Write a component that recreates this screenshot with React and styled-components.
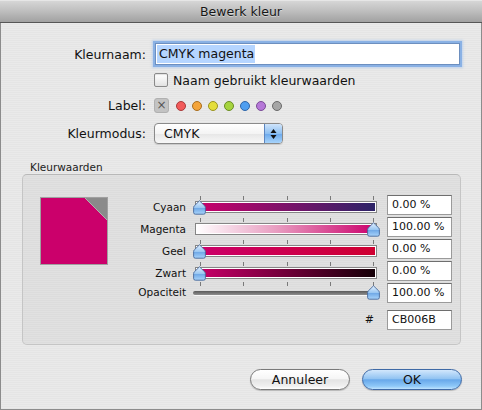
import React from "react"
import styled, { createGlobalStyle } from "styled-components"

const GlobalStyle = createGlobalStyle`
  html, body {
    margin: 0;
    padding: 0;
    background: #e8e8e8;
  }
  body {
    font-family: "DejaVu Sans", "Lucida Grande", sans-serif;
    color: #111;
  }
`

const Window = styled.div`
  width: 482px;
  height: 410px;
  display: flex;
  flex-direction: column;
  box-sizing: border-box;
  overflow: hidden;
`

const TitleBar = styled.div`
  height: 22px;
  flex: none;
  display: flex;
  align-items: center;
  justify-content: center;
  font-size: 12.5px;
  color: #161616;
  text-shadow: 0 1px 0 rgba(255, 255, 255, 0.45);
  background: linear-gradient(#d6d6d6, #bdbdbd 50%, #a1a1a1);
  border-top: 1px solid #e6e6e6;
  box-sizing: border-box;
  border-bottom: 1px solid #565656;
  height: 23px;
`

const Body = styled.div`
  flex: 1;
  display: flex;
  flex-direction: column;
  padding-top: 20px;
  border: 1px solid #8c8c8c;
  border-top: none;
  background: repeating-linear-gradient(#eaeaea 0 1px, #e5e5e5 1px 2px);
`

const Row = styled.div`
  display: flex;
  align-items: center;
  gap: 8px;
  height: ${(p) => p.h}px;
  margin-top: ${(p) => p.mt || 0}px;
`

const Label = styled.div`
  width: 145px;
  text-align: right;
  font-size: 12.5px;
`

const TextField = styled.div`
  margin-left: 1px;
  width: 305px;
  height: 22px;
  box-sizing: border-box;
  border: 1px solid #6d8fbf;
  background: #fff;
  box-shadow: 0 0 0 2px rgba(120, 165, 225, 0.75), 0 0 2px 3px rgba(150, 190, 240, 0.5);
  display: flex;
  align-items: center;
  padding-left: 1px;
  font-size: 12.5px;
`

const Selected = styled.span`
  background: #b5d5ff;
  padding: 1px 1px 2px 2px;
`

const CheckBox = styled.span`
  width: 14px;
  height: 14px;
  box-sizing: border-box;
  border: 1px solid #8a8a8a;
  border-radius: 2px;
  background: linear-gradient(#ffffff, #f2f2f2 50%, #e2e2e2);
  box-shadow: inset 0 1px 1px rgba(0, 0, 0, 0.12);
`

const CheckText = styled.span`
  font-size: 12.5px;
  margin-left: -3px;
`

const Swatches = styled.div`
  display: flex;
  align-items: center;
  gap: 6px;
`

const NoLabel = styled.span`
  width: 15px;
  height: 15px;
  box-sizing: border-box;
  border-radius: 3px;
  background: #c3c3c3;
  border: 1px solid #b0b0b0;
  color: #555;
  font-size: 12px;
  line-height: 13px;
  text-align: center;
  margin-right: 1px;
`

const Dot = styled.span`
  width: 10px;
  height: 10px;
  box-sizing: border-box;
  border-radius: 50%;
  background: ${(p) => p.c};
  border: 1px solid ${(p) => p.b};
`

const Popup = styled.div`
  width: 129px;
  height: 21px;
  box-sizing: border-box;
  border: 1px solid #8a8a8a;
  border-radius: 4px;
  display: flex;
  overflow: hidden;
  background: linear-gradient(#ffffff, #f4f4f4 50%, #e6e6e6 51%, #f8f8f8);
  box-shadow: 0 1px 1px rgba(0, 0, 0, 0.12);
`

const PopupText = styled.span`
  flex: 1;
  padding-left: 9px;
  font-size: 12.5px;
  line-height: 19px;
`

const Stepper = styled.span`
  width: 17px;
  border-left: 1px solid #5c86c0;
  background: linear-gradient(#cfe4fb, #8ec0f2 50%, #6aa8ec 51%, #a8d4fb);
  display: flex;
  align-items: center;
  justify-content: center;
`

const GroupTitle = styled.div`
  margin: 17px 0 0 29px;
  height: 13px;
  font-size: 10.5px;
  line-height: 13px;
  color: #222;
`

const GroupBox = styled.div`
  margin-left: 21px;
  width: 439px;
  height: 171px;
  box-sizing: border-box;
  border: 1px solid #c5c5c5;
  border-top-color: #b8b8b8;
  border-radius: 5px;
  background: rgba(0, 0, 0, 0.035);
  padding: 20px 0 0 17px;
  display: flex;
  align-items: flex-start;
`

const Swatch = styled.div`
  margin-top: 2px;
  width: 68px;
  height: 68px;
  box-sizing: border-box;
  border: 1px solid #a0a0a0;
  background: linear-gradient(to bottom left, #8a8a8a 0 15px, #b0b0b0 15px 16px, #cb006b 16px);
`

const Sliders = styled.div`
  margin-left: 12px;
  display: grid;
  grid-template-columns: 66px 186px 66px;
  grid-auto-rows: 22px;
  column-gap: 7px;
`

const SliderLabel = styled.div`
  text-align: right;
  font-size: 10.5px;
  padding-top: ${(p) => (p.thin ? 3 : 6)}px;
`

const SliderCell = styled.div`
  position: relative;
`

const Tick = styled.span`
  position: absolute;
  top: ${(p) => (p.thin ? -1 : 1)}px;
  width: 1px;
  height: 4px;
  background: #7a7a7a;
`

const Bar = styled.div`
  position: absolute;
  left: 2px;
  right: 2px;
  top: 6px;
  height: 12px;
  box-sizing: border-box;
  border: 1px solid #858585;
  box-shadow: inset 0 0 0 1px #fff;
  background: ${(p) => p.bg};
`

const Track = styled.div`
  position: absolute;
  left: 0;
  right: 2px;
  top: 8px;
  height: 4px;
  border-radius: 2px;
  background: linear-gradient(#5a5a5a, #8f8f8f);
  box-shadow: 0 1px 0 rgba(255, 255, 255, 0.7);
`

const Thumb = styled.svg`
  position: absolute;
  top: ${(p) => (p.thin ? 2 : 5)}px;
  width: 13px;
  height: 15px;
`

const Field = styled.div`
  margin-left: 1px;
  margin-top: ${(p) => p.mt || 0}px;
  height: 20px;
  box-sizing: border-box;
  border: 1px solid #9a9a9a;
  border-top-color: #6e6e6e;
  background: #fff;
  font-size: 11px;
  line-height: 18px;
  padding-left: 4px;
`

const Hash = styled.div`
  grid-column: 2;
  text-align: right;
  font-size: 11px;
  padding: 8px 5px 0 0;
`

const Buttons = styled.div`
  margin-top: 24px;
  display: flex;
  justify-content: flex-end;
  gap: 12px;
  padding-right: 19px;
`

const Button = styled.button`
  width: 100px;
  height: 21px;
  padding: 0;
  border-radius: 11px;
  font-family: inherit;
  font-size: 12.5px;
  color: #111;
  border: 1px solid ${(p) => (p.primary ? "#3f6aa6" : "#7a7a7a")};
  background: ${(p) =>
    p.primary
      ? "linear-gradient(#d2e7fc, #93c4f2 45%, #68a8ea 52%, #8ec8f8 85%, #bfe3ff)"
      : "linear-gradient(#ffffff, #f6f6f6 45%, #e4e4e4 52%, #f0f0f0 85%, #ffffff)"};
  box-shadow: 0 1px 1px rgba(0, 0, 0, 0.2);
`

const labelColors = [
  ["#f25a5a", "#a83a3a"],
  ["#f4a43a", "#a86e20"],
  ["#e4de3c", "#9a9420"],
  ["#a6d43e", "#6a8c24"],
  ["#4e9ef0", "#2f66a8"],
  ["#b678d8", "#7a4c96"],
  ["#a6a6a6", "#6a6a6a"],
]

const channels = [
  { name: "Cyaan", value: 0, bg: "linear-gradient(to right, #cb006b, #2c2468)" },
  { name: "Magenta", value: 100, bg: "linear-gradient(to right, #ffffff, #e89cc0 45%, #cb006b)" },
  { name: "Geel", value: 0, bg: "linear-gradient(to right, #cb006b, #cf0030)" },
  { name: "Zwart", value: 0, bg: "linear-gradient(to right, #cb006b, #140006)" },
]

const ticks = [7, 50, 94, 137, 180]

function ThumbIcon({ pct, thin }) {
  const x = 6 + (pct / 100) * 174 - 6
  return (
    <Thumb thin={thin} viewBox="0 0 13 15" style={{ left: x }}>
      <defs>
        <linearGradient id="tg" x1="0" y1="0" x2="0" y2="1">
          <stop offset="0" stopColor="#e4f1ff" />
          <stop offset="0.5" stopColor="#9cc8f2" />
          <stop offset="0.55" stopColor="#6fa8e6" />
          <stop offset="1" stopColor="#a9d4fb" />
        </linearGradient>
      </defs>
      <path
        d="M6.5 0.8 L11.8 6 Q12.4 6.6 12.4 7.5 V12.4 Q12.4 14.2 10.6 14.2 H2.4 Q0.6 14.2 0.6 12.4 V7.5 Q0.6 6.6 1.2 6 Z"
        fill="url(#tg)"
        stroke="#46689a"
        strokeWidth="0.9"
      />
    </Thumb>
  )
}

function Slider({ bg, value, thin }) {
  return (
    <SliderCell>
      {ticks.map((t) => (
        <Tick key={t} thin={thin} style={{ left: t }} />
      ))}
      {thin ? <Track /> : <Bar bg={bg} />}
      <ThumbIcon pct={value} thin={thin} />
    </SliderCell>
  )
}

export default function App() {
  return (
    <>
      <GlobalStyle />
      <Window>
        <TitleBar>Bewerk kleur</TitleBar>
        <Body>
          <Row h={22}>
            <Label>Kleurnaam:</Label>
            <TextField>
              <Selected>CMYK magenta</Selected>
            </TextField>
          </Row>
          <Row h={14} mt={8}>
            <Label />
            <CheckBox />
            <CheckText>Naam gebruikt kleurwaarden</CheckText>
          </Row>
          <Row h={15} mt={11}>
            <Label>Label:</Label>
            <Swatches>
              <NoLabel>×</NoLabel>
              {labelColors.map(([c, b]) => (
                <Dot key={c} c={c} b={b} />
              ))}
            </Swatches>
          </Row>
          <Row h={21} mt={10}>
            <Label>Kleurmodus:</Label>
            <Popup>
              <PopupText>CMYK</PopupText>
              <Stepper>
                <svg width="7" height="12" viewBox="0 0 7 12">
                  <path d="M3.5 1 L6.5 5 H0.5 Z" fill="#111" />
                  <path d="M3.5 11 L6.5 7 H0.5 Z" fill="#111" />
                </svg>
              </Stepper>
            </Popup>
          </Row>

          <GroupTitle>Kleurwaarden</GroupTitle>
          <GroupBox>
            <Swatch />
            <Sliders>
              {channels.map((ch) => (
                <React.Fragment key={ch.name}>
                  <SliderLabel>{ch.name}</SliderLabel>
                  <Slider bg={ch.bg} value={ch.value} />
                  <Field>{ch.value.toFixed(2)} %</Field>
                </React.Fragment>
              ))}
              <SliderLabel thin>Opaciteit</SliderLabel>
              <Slider thin value={100} />
              <Field>100.00 %</Field>
              <Hash>#</Hash>
              <Field mt={5}>CB006B</Field>
            </Sliders>
          </GroupBox>

          <Buttons>
            <Button>Annuleer</Button>
            <Button primary>OK</Button>
          </Buttons>
        </Body>
      </Window>
    </>
  )
}
